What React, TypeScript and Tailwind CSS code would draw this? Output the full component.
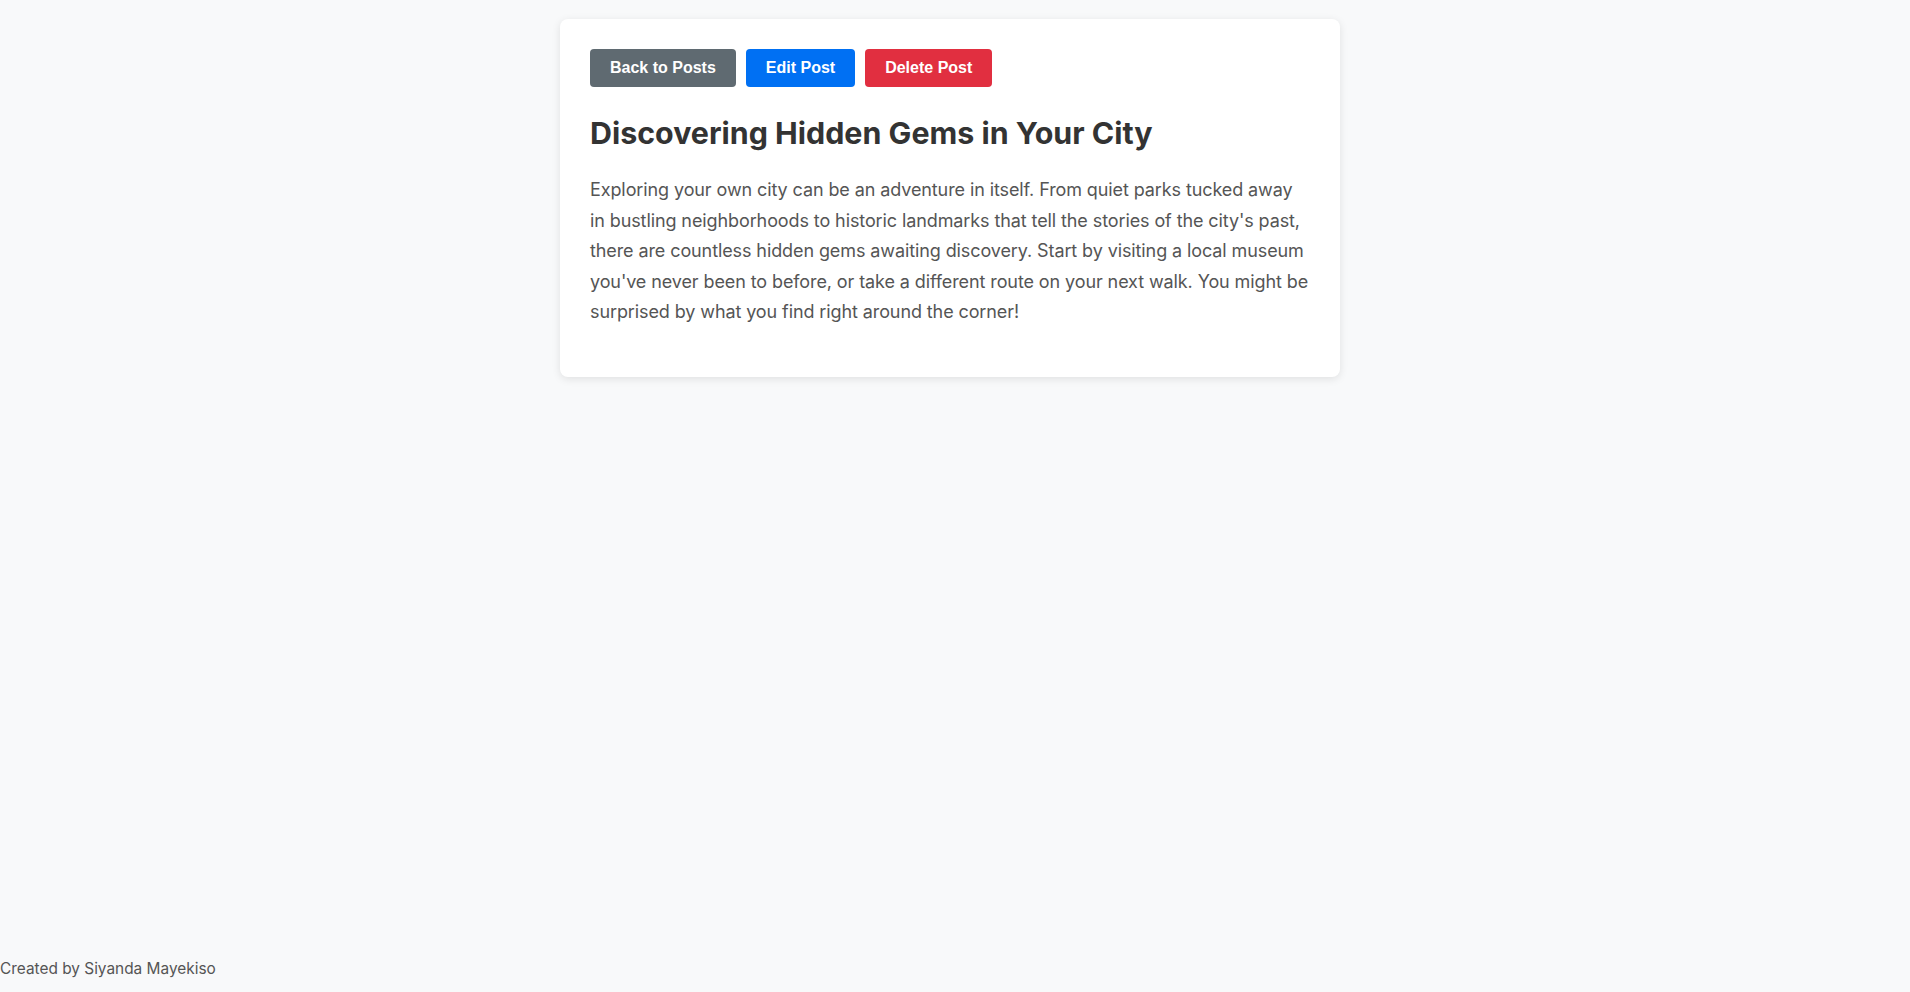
import React from "react";

const post = {
  title: "Discovering Hidden Gems in Your City",
  body: "Exploring your own city can be an adventure in itself. From quiet parks tucked away in bustling neighborhoods to historic landmarks that tell the stories of the city's past, there are countless hidden gems awaiting discovery. Start by visiting a local museum you've never been to before, or take a different route on your next walk. You might be surprised by what you find right around the corner!",
};

const btn =
  "h-[38px] px-5 rounded-[4px] text-white text-[16px] font-bold font-['Liberation_Sans',Arial,sans-serif]";

export default function App() {
  return (
    <div className="min-h-screen flex flex-col bg-[#f8f9fa] font-['Inter',sans-serif]">
      <main className="flex-1 flex justify-center pr-[10px] pt-[19px]">
        <article className="w-[780px] self-start bg-white rounded-lg shadow-[0_2px_8px_rgba(0,0,0,0.1)] p-[30px]">
          <div className="flex gap-[10px]">
            <button className={`${btn} bg-[#5f6a71]`}>Back to Posts</button>
            <button className={`${btn} bg-[#0070f3]`}>Edit Post</button>
            <button className={`${btn} bg-[#e12f40]`}>Delete Post</button>
          </div>
          <h1 className="mt-[28px] text-[30.4px] leading-[36px] font-bold text-[#333]">
            {post.title}
          </h1>
          <p className="mt-[24px] mb-[19px] text-[18px] leading-[1.7] text-[#555] tracking-[-0.1px]">
            {post.body}
          </p>
        </article>
      </main>
      <footer className="pb-[12px] text-[15.4px] text-[#555]">
        Created by Siyanda Mayekiso
      </footer>
    </div>
  );
}
